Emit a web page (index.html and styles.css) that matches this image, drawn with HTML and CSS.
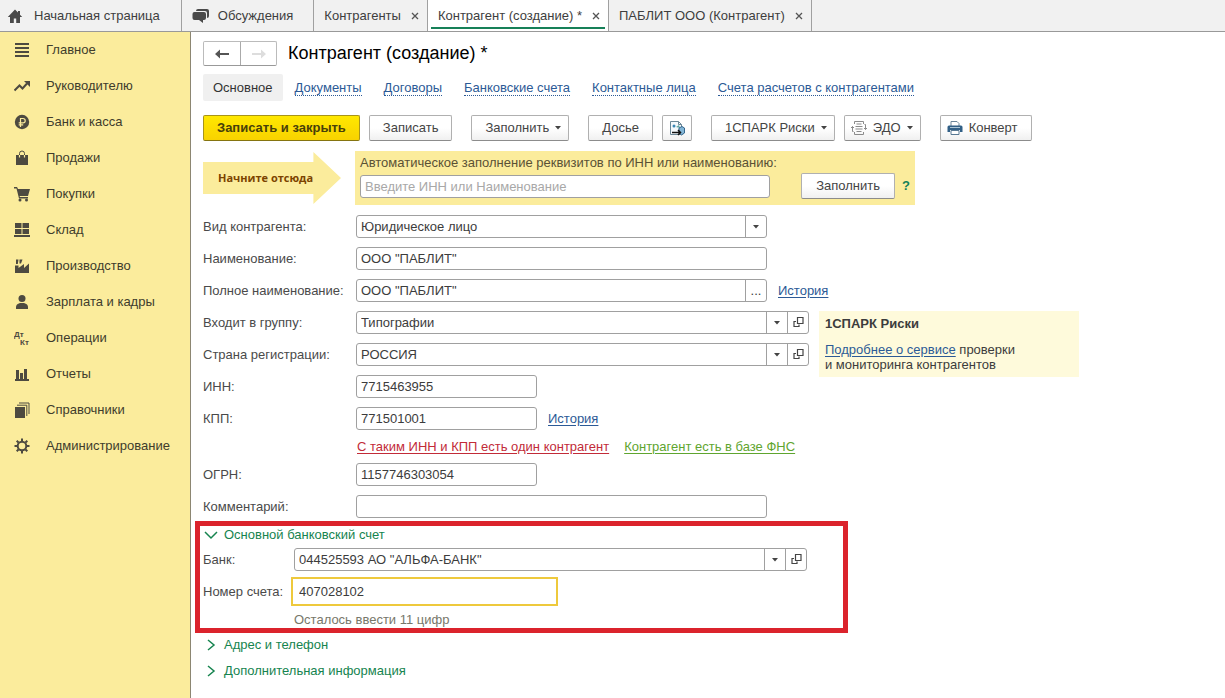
FILE: index.html
```html
<!DOCTYPE html>
<html lang="ru">
<head>
<meta charset="utf-8">
<title>Контрагент (создание)</title>
<link rel="stylesheet" href="styles.css">
</head>
<body>
<svg class="sprite" aria-hidden="true">
  <symbol id="i-open" viewBox="0 0 11 11"><path d="M4.500 .5h5.500v6h-5.500z M3 4.500h-2v5h5v-2" fill="none" stroke="#444" stroke-width="1.200"/></symbol>
  <symbol id="i-down" viewBox="0 0 6 4"><path d="M0 0h6L3 3.500z" fill="#444"/></symbol>
  <symbol id="i-close" viewBox="0 0 8 8"><path d="M1 1l6 6M7 1l-6 6" fill="none" stroke="#555" stroke-width="1.300"/></symbol>
</svg>

<header class="tabs">
  <a class="tab" href="#"><svg class="tab-icon home" viewBox="0 0 16 16"><path d="M8 1.500L.8 9H3v6h3.800v-4.500h2.400V15H13V9h2.200L13 6.700V3h-2v1.600z" fill="#4a4a4a"/></svg>Начальная страница</a>
  <a class="tab wide" href="#"><svg class="tab-icon chat" viewBox="0 0 18 16"><path d="M6 1h9q2 0 2 2v5q0 2-2 2V5q0-2-2-2H4q0-2 2-2z" fill="#4a4a4a"/><path d="M2.500 4H12q2 0 2 2v4q0 2-2 2h-1v3l-4-3H2.500q-2 0-2-2V6q0-2 2-2z" fill="#4a4a4a"/></svg>Обсуждения</a>
  <div class="tab"><a href="#">Контрагенты</a><button class="close" aria-label="Закрыть"><svg viewBox="0 0 8 8"><use href="#i-close"/></svg></button></div>
  <div class="tab active"><a href="#">Контрагент (создание) *</a><button class="close" aria-label="Закрыть"><svg viewBox="0 0 8 8"><use href="#i-close"/></svg></button></div>
  <div class="tab"><a href="#">ПАБЛИТ ООО (Контрагент)</a><button class="close" aria-label="Закрыть"><svg viewBox="0 0 8 8"><use href="#i-close"/></svg></button></div>
</header>

<div class="body">
  <nav class="sidebar">
    <a href="#"><svg viewBox="0 0 16 16"><path d="M1 1h14v2H1zM1 5h14v2H1zM1 9h14v2H1zM1 13h14v2H1z"/></svg>Главное</a>
    <a href="#"><svg viewBox="0 0 16 16"><path d="M.5 12.500L5.500 7.500l3 3L13 5.500" class="line"/><path d="M10 3h6v6z"/></svg>Руководителю</a>
    <a href="#"><svg viewBox="0 0 16 16"><circle cx="8" cy="8" r="7.200"/><path d="M6.500 13V4.500h2.500a2.200 2.200 0 0 1 0 4.400H4.700M4.700 10.800h4.500" class="cut"/></svg>Банк и касса</a>
    <a href="#"><svg viewBox="0 0 16 16"><path d="M2 5h12v10H2z"/><path d="M5.500 5V3.500q0-2.500 2.500-2.500t2.500 2.500V5" class="thin"/><path d="M5.500 5v2.500M10.500 5v2.500" class="cut"/></svg>Продажи</a>
    <a href="#"><svg viewBox="0 0 16 16"><path d="M0 1h3l1 2h12l-2 7H5.500l.5 1h8v1.500H5L2.500 2.500H0z"/><circle cx="6" cy="14" r="1.500"/><circle cx="12.500" cy="14" r="1.500"/></svg>Покупки</a>
    <a href="#"><svg viewBox="0 0 16 16"><path d="M1 1h6.500v5H1zM8.500 1H15v5H8.500zM1 7h6.500v5H1zM8.500 7H15v5H8.500zM0 13h16v2H0z"/></svg>Склад</a>
    <a href="#"><svg viewBox="0 0 16 16"><path d="M1 15V7.500h3.500V10L10 6v4l5-4.500V15z"/><path d="M2 6V1.500h2.500L3.800 6zM5.500 5.500V1.500h3L7 5.500z"/></svg>Производство</a>
    <a href="#"><svg viewBox="0 0 16 16"><circle cx="8" cy="4.500" r="3.500"/><path d="M2 15v-2q0-3 4-4h4q4 1 4 4v2z"/></svg>Зарплата и кадры</a>
    <a href="#"><svg viewBox="0 0 16 16"><text x="0" y="7">Дт</text><text x="6" y="15">Кт</text></svg>Операции</a>
    <a href="#"><svg viewBox="0 0 16 16"><path d="M2 4h3v9h1V7h3v6h1V3h3v10h2v2H1v-2h1z"/></svg>Отчеты</a>
    <a href="#"><svg viewBox="0 0 16 16"><path d="M1 5h10v11H1z"/><path d="M3 3.200h9.800V14M5 1h10v11" class="thin"/></svg>Справочники</a>
    <a href="#"><svg viewBox="0 0 16 16"><circle cx="8" cy="8" r="4.300" class="line"/><path d="M8 .5V3M8 13v2.500M.5 8H3M13 8h2.500M2.700 2.700l1.800 1.800M11.500 11.500l1.800 1.800M2.700 13.300l1.800-1.800M11.500 4.500l1.800-1.800" class="line"/></svg>Администрирование</a>
  </nav>

  <main class="page">
    <div class="title-row">
      <div class="history">
        <button aria-label="Назад"><svg viewBox="0 0 14 10"><path d="M0 5l5-4.500V4h9v2H5v3.500z" fill="#555"/></svg></button>
        <button aria-label="Вперед" disabled><svg viewBox="0 0 14 10"><path d="M14 5L9 .5V4H0v2h9v3.500z" fill="#ddd"/></svg></button>
      </div>
      <h1>Контрагент (создание) *</h1>
    </div>

    <nav class="sections">
      <a class="current" href="#">Основное</a>
      <a href="#">Документы</a>
      <a href="#">Договоры</a>
      <a href="#">Банковские счета</a>
      <a href="#">Контактные лица</a>
      <a href="#">Счета расчетов с контрагентами</a>
    </nav>

    <div class="commands">
      <div class="group">
        <button class="btn primary">Записать и закрыть</button>
        <button class="btn">Записать</button>
      </div>
      <button class="btn menu">Заполнить<svg class="caret" viewBox="0 0 6 4"><use href="#i-down"/></svg></button>
      <div class="group">
        <button class="btn">Досье</button>
        <button class="btn icon-only" aria-label="Создать на основании"><svg class="ico" viewBox="0 0 16 16"><path d="M1.500 14.500V1.500h8l3 3v10z" fill="#f4f9fc" stroke="#6b8797"/><path d="M9.500 1.500v3h3" fill="none" stroke="#6b8797"/><circle cx="5" cy="6" r="1.500" fill="#3a87b5"/><path d="M7 7l3-2 1 3z" fill="#5ca4a0"/><path d="M10 8l3-1.500 2.500 1.500v5l-3 2-2.500-2z" fill="#82b6d7" stroke="#35668c"/><path d="M3 12.500h8M9 10l2.500 2.500L9 15" fill="none" stroke="#111" stroke-width="1.500"/></svg></button>
      </div>
      <div class="group">
        <button class="btn menu">1СПАРК Риски<svg class="caret" viewBox="0 0 6 4"><use href="#i-down"/></svg></button>
        <button class="btn menu with-icon"><svg class="ico" viewBox="0 0 16 16"><path d="M3.500 4V1.500h9V4M3.500 12v2.500h9V12M5.500 4h5M4.500 6.500h7M4.500 9h7M5.500 11.500h5M2.500 11.500h-1v-5M14.500 9.500v-5h-1M0 8l1.500-1.500L3 8M13 8l1.500 1.500L16 8" fill="none" stroke="#8b8b8b"/></svg>ЭДО<svg class="caret" viewBox="0 0 6 4"><use href="#i-down"/></svg></button>
      </div>
      <button class="btn with-icon"><svg class="ico" viewBox="0 0 16 16"><path d="M4 6V1.500h6l2 2V6" fill="#fff" stroke="#6a8499"/><path d="M2 5.500h12q1.500 0 1.500 1.500v5H13v-2H3v2H.5V7Q.5 5.500 2 5.500z" fill="#315f86"/><path d="M4 10.500h8v4H4z" fill="#fff" stroke="#587893"/><path d="M3 7.500h10" stroke="#a9c4d6"/></svg>Конверт</button>
    </div>

    <div class="autofill">
      <div class="hint-arrow"><span>Начните отсюда</span></div>
      <div class="autofill-panel">
        <label for="auto">Автоматическое заполнение реквизитов по ИНН или наименованию:</label>
        <div class="autofill-row">
          <input class="field" id="auto" type="text" placeholder="Введите ИНН или Наименование">
          <button class="btn">Заполнить</button>
          <a class="help" href="#">?</a>
        </div>
      </div>
    </div>

    <form class="form">
      <div class="row"><label for="kind">Вид контрагента:</label>
        <div class="field combo"><select id="kind"><option>Юридическое лицо</option></select><span class="cell"><svg class="caret" viewBox="0 0 6 4"><use href="#i-down"/></svg></span></div></div>
      <div class="row"><label for="name">Наименование:</label><input class="field" id="name" type="text" value='ООО "ПАБЛИТ"'></div>
      <div class="row"><label for="full">Полное наименование:</label>
        <div class="field combo"><input id="full" type="text" value='ООО "ПАБЛИТ"'><button type="button" class="cell">...</button></div>
        <a class="link" href="#">История</a></div>
      <div class="split">
        <div class="stack">
          <div class="row"><label for="group">Входит в группу:</label>
            <div class="field combo long"><input id="group" type="text" value="Типографии"><button type="button" class="cell" aria-label="Выбрать"><svg class="caret" viewBox="0 0 6 4"><use href="#i-down"/></svg></button><button type="button" class="cell" aria-label="Открыть"><svg class="open" viewBox="0 0 11 11"><use href="#i-open"/></svg></button></div></div>
          <div class="row"><label for="country">Страна регистрации:</label>
            <div class="field combo long"><input id="country" type="text" value="РОССИЯ"><button type="button" class="cell" aria-label="Выбрать"><svg class="caret" viewBox="0 0 6 4"><use href="#i-down"/></svg></button><button type="button" class="cell" aria-label="Открыть"><svg class="open" viewBox="0 0 11 11"><use href="#i-open"/></svg></button></div></div>
          <div class="row"><label for="inn">ИНН:</label><input class="field short" id="inn" type="text" value="7715463955"></div>
        </div>
        <aside class="spark">
          <h2>1СПАРК Риски</h2>
          <p><a class="link" href="#">Подробнее о сервисе</a> проверки<br>и мониторинга контрагентов</p>
        </aside>
      </div>
      <div class="row"><label for="kpp">КПП:</label><input class="field short" id="kpp" type="text" value="771501001"><a class="link" href="#">История</a></div>
      <div class="messages"><a class="link bad" href="#">С таким ИНН и КПП есть один контрагент</a><a class="link good" href="#">Контрагент есть в базе ФНС</a></div>
      <div class="row"><label for="ogrn">ОГРН:</label><input class="field short" id="ogrn" type="text" value="1157746303054"></div>
      <div class="row"><label for="comment">Комментарий:</label><input class="field" id="comment" type="text"></div>

      <section class="bank">
        <button type="button" class="toggle"><svg viewBox="0 0 14 14"><path d="M1 4l6 6 6-6"/></svg>Основной банковский счет</button>
        <div class="row"><label for="bank">Банк:</label>
          <div class="field combo"><input id="bank" type="text" value='044525593 АО "АЛЬФА-БАНК"'><button type="button" class="cell" aria-label="Выбрать"><svg class="caret" viewBox="0 0 6 4"><use href="#i-down"/></svg></button><button type="button" class="cell" aria-label="Открыть"><svg class="open" viewBox="0 0 11 11"><use href="#i-open"/></svg></button></div></div>
        <div class="row"><label for="account">Номер счета:</label><input class="field focused" id="account" type="text" value="407028102"></div>
        <p class="note">Осталось ввести 11 цифр</p>
      </section>

      <div class="more">
        <button type="button" class="toggle"><svg viewBox="0 0 14 14"><path d="M4 2l6 5-6 5"/></svg>Адрес и телефон</button>
        <button type="button" class="toggle"><svg viewBox="0 0 14 14"><path d="M4 2l6 5-6 5"/></svg>Дополнительная информация</button>
      </div>
    </form>
  </main>
</div>
</body>
</html>
```

FILE: styles.css
```css
* { box-sizing: border-box; }
body {
  margin: 0;
  min-height: 100vh;
  display: flex;
  flex-direction: column;
  background: #fff;
  color: #4a4a4a;
  font: 13px/16px "Liberation Sans", Arial, sans-serif;
}
button, input, select { font: inherit; color: inherit; }
button { padding: 0; border: 0; background: none; }
h1, h2, p { margin: 0; }
.sprite { display: none; }

/* Window tabs */
.tabs {
  display: flex;
  height: 32px;
  background: #f1f1f1;
  border-bottom: 1px solid #999;
}
.tab {
  display: flex;
  align-items: center;
  gap: 10px;
  padding: 0 8px 0 10px;
  border-right: 1px solid #a0a0a0;
  color: #3e3e3e;
  white-space: nowrap;
  text-decoration: none;
}
.tab a { color: inherit; text-decoration: none; }
a.tab { gap: 11px; padding: 0 21px 0 7px; }
a.tab.wide { padding: 0 20px 0 10px; gap: 8px; }
.tab.active {
  background: linear-gradient(#168058, #168058) center 27px / calc(100% - 6px) 2px no-repeat #fff;
}
.tab-icon { width: 16px; height: 16px; }
.tab-icon.chat { width: 18px; }
.close { display: flex; }
.close svg { width: 8px; height: 8px; }

.body { flex: 1; display: flex; }

/* Section menu */
.sidebar {
  flex: 0 0 191px;
  background: #fbec9c;
  border-right: 1px solid #8c8672;
}
.sidebar a {
  display: flex;
  align-items: center;
  gap: 16px;
  height: 36px;
  padding-left: 14px;
  color: #403c2c;
  text-decoration: none;
}
.sidebar svg { width: 16px; height: 16px; fill: #4d4a40; }
.sidebar .line { fill: none; stroke: #4d4a40; stroke-width: 2; }
.sidebar .thin { fill: none; stroke: #4d4a40; stroke-width: 1; }
.sidebar .cut { fill: none; stroke: #fbec9c; stroke-width: 1.2; }
.sidebar text { font-size: 8px; font-weight: bold; }

/* Page head */
.page { flex: 1; min-width: 0; padding: 9px 12px 0; }
.title-row { display: flex; align-items: center; gap: 11px; height: 25px; }
.history { display: flex; border: 1px solid #bbb; border-bottom-color: #999; border-radius: 2px; height: 25px; }
.history button { width: 36px; display: flex; align-items: center; justify-content: center; }
.history button + button { border-left: 1px solid #aaa; }
.history svg { width: 14px; height: 10px; }
h1 { font-size: 18px; line-height: 22px; padding-bottom: 2px; font-weight: normal; color: #000; }

.sections { display: flex; align-items: center; gap: 22px; margin-top: 8px; }
.sections a { color: #2c5a96; text-decoration: none; border-bottom: 1px dotted #2c5a96; line-height: 15px; }
.sections .current {
  padding: 0 10px;
  margin-right: -10px;
  border: 0;
  border-radius: 2px;
  background: #f0f0f0;
  color: #333;
  line-height: 27px;
}

.commands { display: flex; gap: 19px; margin-top: 14px; }
.group { display: flex; gap: 9px; }
.btn {
  display: flex;
  align-items: center;
  height: 26px;
  padding: 0 13px;
  border: 1px solid #b0b0b0;
  border-bottom-color: #8c8c8c;
  border-radius: 2px;
  background: linear-gradient(#fff 50%, #f0f0f0);
  color: #444;
  white-space: nowrap;
}
.btn.primary {
  background: linear-gradient(#ffe800, #f8d200);
  border-color: #a8941a;
  border-bottom-color: #857410;
  color: #47400a;
  font-weight: bold;
}
.btn.icon-only { padding: 0 6px; }
.btn.with-icon { padding-left: 6px; }
.btn.menu { padding-right: 7px; }
.ico { width: 16px; height: 16px; }
.btn.with-icon .ico { margin-right: 6px; }
.caret { width: 6px; height: 4px; }
.btn .caret { margin-left: 6px; }

/* Autofill */
.autofill { display: flex; margin-top: 10px; gap: 14px; align-items: center; }
.hint-arrow {
  width: 138px;
  height: 52px;
  display: flex;
  align-items: center;
  padding-left: 15px;
  background: #fbec9c;
  clip-path: polygon(0 19%, 80% 19%, 80% 0, 100% 50%, 80% 100%, 80% 81%, 0 81%);
  color: #7c4300;
  font: bold 11px/16px "Open Sans", "Noto Sans", sans-serif;
  white-space: nowrap;
}
.autofill-panel { width: 560px; padding: 4px 5px 6px; background: #fbec9c; color: #5a5135; }
.autofill-row { display: flex; align-items: center; margin-top: 2px; }
.autofill-row .btn { margin-left: 31px; padding: 0 14px; }
.help { margin-left: 7px; color: #12815a; font-weight: bold; text-decoration: none; }

/* Form */
.form, .stack { display: flex; flex-direction: column; gap: 9px; }
.form { margin-top: 10px; }
.row { display: flex; align-items: center; }
.row > label { flex: 0 0 153px; }
.row > .link { margin-left: 11px; }
.field {
  width: 411px;
  height: 23px;
  padding: 0 4px;
  border: 1px solid #a0a0a0;
  border-radius: 3px;
  background: #fff;
  color: #3c3c3c;
}
.field::placeholder { color: #a8a8a8; }
.field.long { width: 453px; }
.field.short { width: 181px; }
.combo { display: flex; padding: 0; }
.combo input, .combo select {
  flex: 1;
  min-width: 0;
  padding: 0 4px;
  border: 0;
  background: none;
  appearance: none;
  outline: 0;
}
.cell {
  flex: 0 0 21px;
  display: flex;
  align-items: center;
  justify-content: center;
  border-left: 1px solid #a0a0a0;
}
.open { width: 11px; height: 11px; }
.link { color: #2c5a96; text-decoration: underline; text-underline-offset: 2px; }
.link.bad { color: #c22b38; }
.link.good { color: #5fa52f; }
.messages { display: flex; gap: 15px; margin-left: 154px; line-height: 15px; }

.split { display: flex; gap: 10px; align-items: flex-start; }
.spark { width: 260px; padding: 5px 6px; background: #fefadb; color: #3c3c3c; line-height: 15px; }
.spark h2 { font-size: 13px; line-height: 16px; margin-bottom: 10px; }

.bank {
  width: 653px;
  max-width: 100%;
  margin: -6px 0 0 -8px;
  padding: 1px 3px 0;
  border: 5px solid #db232c;
}
.bank .row > label { flex-basis: 91px; }
.bank .combo { width: 513px; }
.toggle { display: flex; align-items: center; gap: 6px; height: 16px; padding-left: 1px; color: #16844f; }
.toggle svg { width: 14px; height: 14px; fill: none; stroke: #16844f; stroke-width: 1.5; }
.bank .toggle { margin: 0 0 5px; }
.bank .focused {
  width: 267px;
  height: 29px;
  margin: 6px 0 6px -3px;
  padding: 0 6px;
  border: 2px solid #eec93c;
  border-radius: 0;
}
.note { margin-left: 91px; color: #77776a; }
.more { display: flex; flex-direction: column; gap: 10px; margin-top: -5px; }
```
